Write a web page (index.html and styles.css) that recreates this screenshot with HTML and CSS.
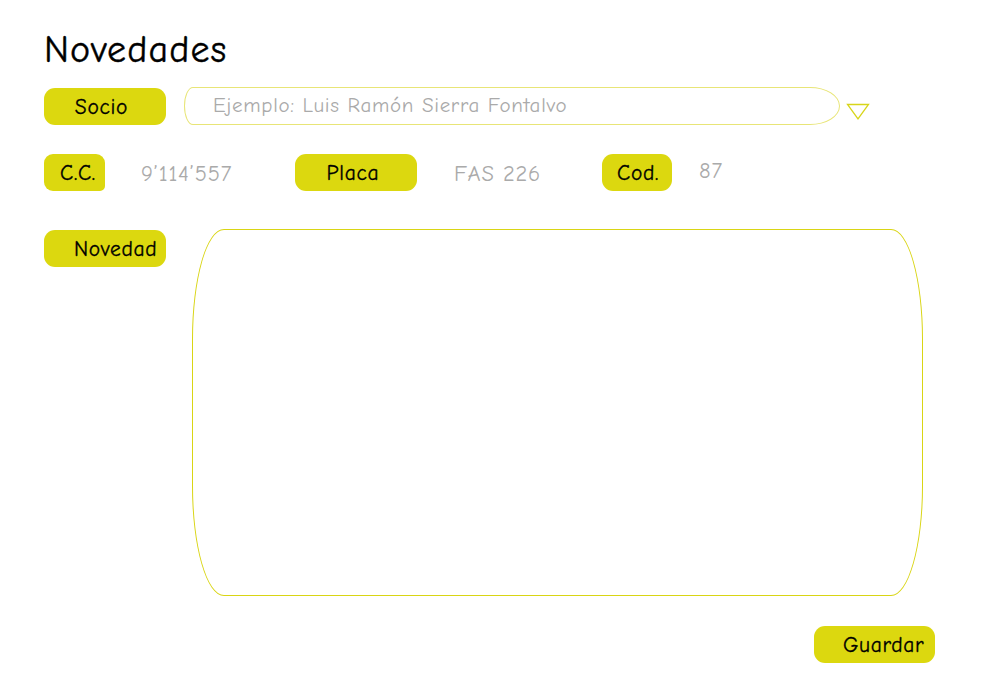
FILE: index.html
```html
<!DOCTYPE html>
<html lang="es">
<head>
<meta charset="utf-8">
<title>Novedades</title>
<link rel="stylesheet" href="styles.css">
</head>
<body>
<div class="page">
  <h1 class="title">Novedades</h1>
  <div class="row row-socio">
    <div class="tag tag-socio">Socio</div>
    <div class="select">
      <div class="input">Ejemplo: Luis Ramón Sierra Fontalvo</div>
      <svg class="caret" width="24" height="18" viewBox="0 0 24 18"><polygon points="1.5,1.5 22.5,1.5 12,16" fill="none" stroke="#d8d51a" stroke-width="1.3"/></svg>
    </div>
  </div>
  <div class="row row-data">
    <div class="tag tag-cc">C.C.</div>
    <div class="value value-cc">9’114’557</div>
    <div class="tag tag-placa">Placa</div>
    <div class="value value-placa">FAS 226</div>
    <div class="tag tag-cod">Cod.</div>
    <div class="value value-cod">87</div>
  </div>
  <div class="row row-nov">
    <div class="tag tag-nov">Novedad</div>
    <div class="area"></div>
  </div>
  <div class="footer">
    <div class="tag tag-save">Guardar</div>
  </div>
</div>
</body>
</html>
```

FILE: styles.css
```css
* { box-sizing: border-box; }
html, body { margin: 0; padding: 0; background: #ffffff; }
body {
  font-family: "Comic Sans MS", "Comic Neue", "Open Sans", "DejaVu Sans", sans-serif;
  color: #000;
  width: 1000px;
  height: 700px;
  overflow: hidden;
}
.page {
  padding: 27px 0 0 44px;
  display: flex;
  flex-direction: column;
}
.title {
  margin: 0;
  font-weight: normal;
  font-size: 38px;
  line-height: 46px;
  height: 46px;
  padding-left: 0;
  letter-spacing: 1.1px;
  -webkit-text-stroke: 0.4px #000;
}
.row { display: flex; align-items: flex-start; }
.row-socio { margin-top: 14px; height: 38px; }
.tag {
  background: #dcd80f;
  border-radius: 11px;
  height: 37px;
  display: flex;
  align-items: center;
  font-size: 21.5px;
  letter-spacing: 0.7px;
  color: #000;
  white-space: nowrap;
  -webkit-text-stroke: 0.3px #000;
}
.tag-socio { width: 122px; justify-content: center; padding-right: 7px; margin-top: 1px; }
.select { display: flex; align-items: flex-start; margin-left: 18px; }
.input {
  width: 656px;
  height: 38px;
  border: 1.5px solid #e8e577;
  border-radius: 9px 30px 30px 9px / 19px 19px 19px 19px;
  color: #aaaaaa;
  font-size: 21px;
  letter-spacing: 0.7px;
  line-height: 34px;
  padding-left: 28px;
  white-space: nowrap;
}
.caret { margin-left: 6px; margin-top: 16px; }
.row-data { margin-top: 29px; height: 37px; align-items: center; }
.tag-cc { width: 61px; padding-left: 16px; border-radius: 9px 9px 5px 9px; }
.value { color: #aaaaaa; font-size: 22.5px; letter-spacing: 0.8px; white-space: nowrap; }
.value-cc { margin-left: 36px; width: 154px; padding-top: 3px; }
.tag-placa { width: 122px; justify-content: center; padding-right: 6px; }
.value-placa { margin-left: 37px; width: 148px; padding-top: 3px; }
.tag-cod { width: 70px; padding-left: 15px; }
.value-cod { margin-left: 27px; padding-bottom: 4px; }
.row-nov { margin-top: 38px; }
.tag-nov { width: 122px; padding-left: 30px; margin-top: 1px; }
.area {
  margin-left: 26px;
  width: 731px;
  height: 367px;
  border: 1.2px solid #d9d514;
  border-radius: 32px / 110px;
}
.footer { display: flex; justify-content: flex-end; width: 891px; margin-top: 30px; }
.tag-save { width: 121px; padding-left: 29px; }
```
